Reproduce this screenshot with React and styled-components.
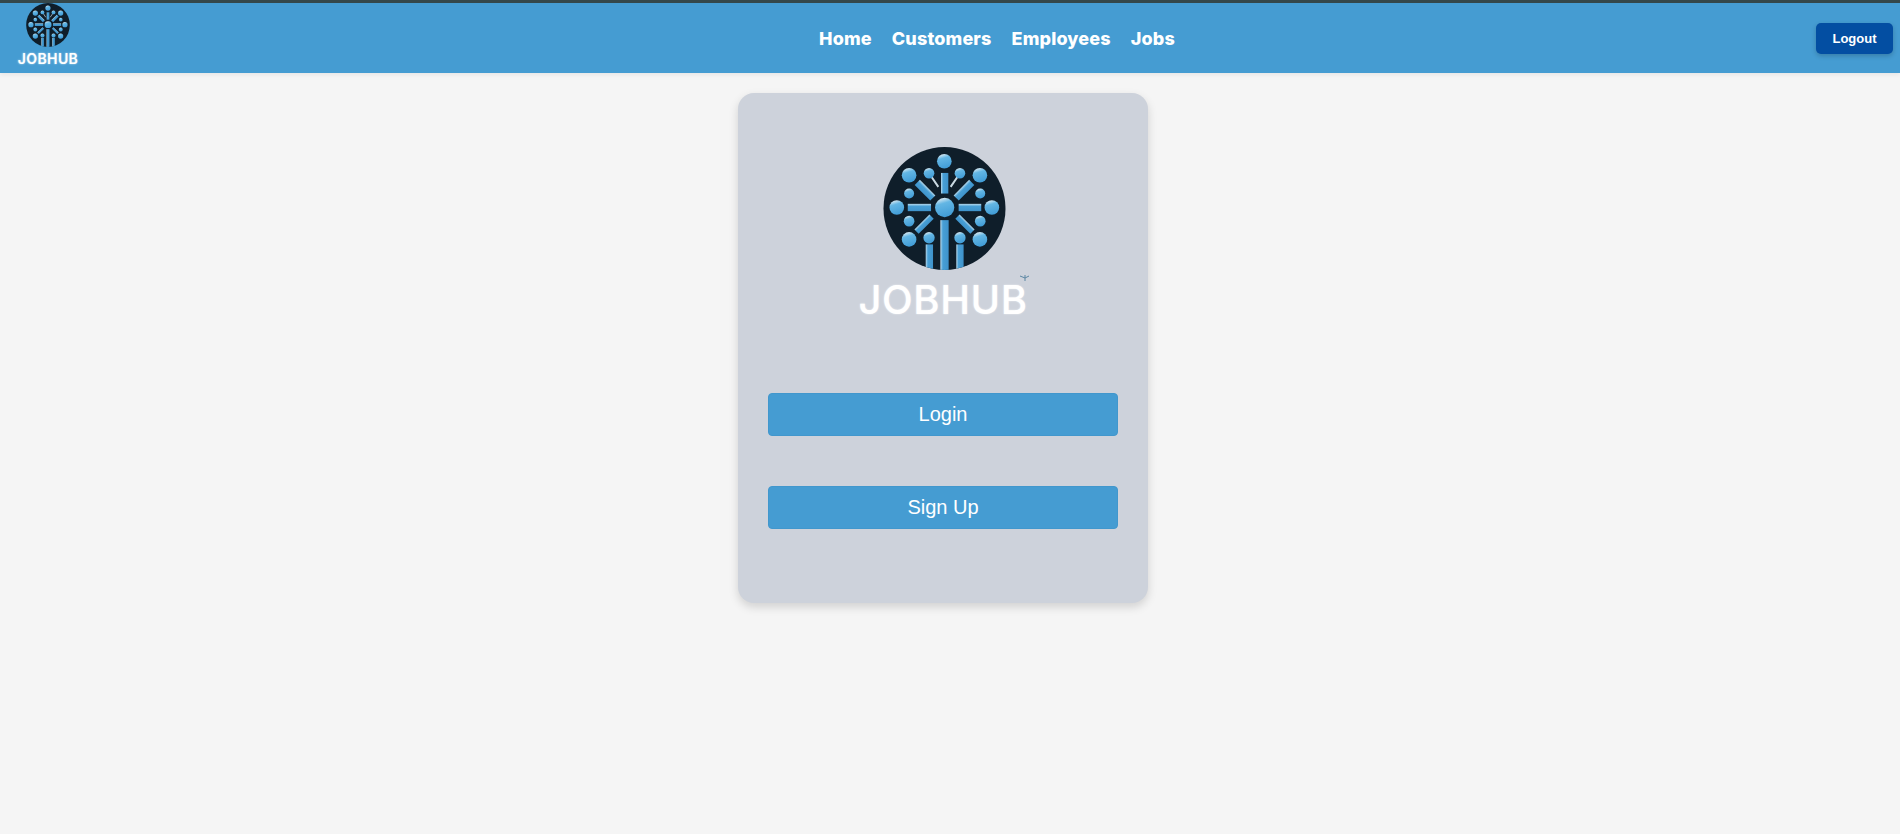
import React from "react";
import styled, { createGlobalStyle } from "styled-components";

const GlobalStyle = createGlobalStyle`
  html, body {
    margin: 0;
    padding: 0;
    background: #f5f5f5;
    font-family: "Liberation Sans", Arial, sans-serif;
  }
`;

const Page = styled.div`
  min-height: 834px;
  background: #f5f5f5;
`;

const NavBar = styled.nav`
  height: 70px;
  box-sizing: content-box;
  border-top: 3px solid #34474a;
  background: #459cd2;
  display: flex;
  align-items: center;
  justify-content: space-between;
  padding: 0 7px 0 18px;
  box-shadow: 0 2px 4px rgba(0, 0, 0, 0.06);
`;

const Brand = styled.div`
  width: 160px;
  height: 70px;
  display: flex;
  flex-direction: column;
  align-items: flex-start;
`;

const BrandStack = styled.div`
  width: 60px;
  display: flex;
  flex-direction: column;
  align-items: center;
`;

const NavLinks = styled.div`
  display: flex;
  gap: 20px;
`;

const NavLink = styled.a`
  color: #fff;
  font-family: Inter, "Open Sans", sans-serif;
  font-weight: 800;
  font-size: 18px;
  letter-spacing: 0.15px;
  line-height: 24px;
  text-decoration: none;
  margin-top: 1px;
`;

const LogoutButton = styled.button`
  width: 77px;
  height: 31px;
  border: none;
  border-radius: 5px;
  background: #034ea2;
  color: #fff;
  font-family: "Liberation Sans", Arial, sans-serif;
  font-weight: 700;
  font-size: 13px;
  box-shadow: 0 2px 5px rgba(0, 0, 0, 0.2);
`;

const Main = styled.main`
  display: flex;
  justify-content: center;
  padding: 20px 14px 0 0;
`;

const Card = styled.section`
  width: 410px;
  height: 510px;
  box-sizing: border-box;
  padding: 54px 30px 0;
  background: #cdd2db;
  border-radius: 16px;
  box-shadow: 0 4px 10px rgba(0, 0, 0, 0.15);
  display: flex;
  flex-direction: column;
  align-items: center;
`;

const LogoStack = styled.div`
  display: flex;
  flex-direction: column;
  align-items: center;
  position: relative;
  margin-bottom: 71px;
`;

const MarkSlot = styled.div`
  display: flex;
  margin-left: ${(p) => (p.$shift ? "3px" : "0")};
`;

const LogoWord = styled.span`
  color: #fff;
  font-family: Inter, "Open Sans", sans-serif;
  font-weight: ${(p) => (p.$small ? 600 : 500)};
  font-size: ${(p) => (p.$small ? "14px" : "40px")};
  letter-spacing: ${(p) => (p.$small ? "0.4px" : "0.6px")};
  line-height: ${(p) => (p.$small ? "13px" : "44px")};
  margin-top: ${(p) => (p.$small ? "5px" : "8px")};
  text-shadow: 0 0 2px rgba(255, 255, 255, 0.7);
`;

const TradeMark = styled.svg`
  position: absolute;
  right: -2px;
  bottom: 40px;
`;

const ActionButton = styled.button`
  width: 350px;
  height: 43px;
  margin-bottom: 50px;
  border: 1px solid #4197cd;
  border-radius: 4px;
  background: #459cd2;
  color: #fff;
  font-family: "Liberation Sans", Arial, sans-serif;
  font-size: 20px;
`;

const DOTS = [
  [313, 93, 22], [207, 135, 22], [420, 135, 22], [267, 129, 16], [360, 129, 16],
  [207, 190, 15], [421, 190, 15], [170, 232, 22], [456, 232, 22], [207, 273, 16],
  [421, 273, 16], [207, 328, 22], [420, 328, 22], [267, 323, 17], [360, 323, 17],
  [314, 232, 29],
];

// x, y, width, height, rotation around the bar's middle
const BARS = [
  [303, 128, 22, 62, 0], [203, 221, 70, 22, 0], [356, 221, 68, 22, 0],
  [301, 270, 25, 152, 0], [257, 343, 22, 77, 0], [349, 343, 22, 77, 0],
  [222, 169, 66, 22, 45], [339, 169, 66, 22, -45],
  [220, 273, 64, 18, -45], [343, 273, 64, 18, 45],
];

function LogoMark({ size, id }) {
  return (
    <svg width={size} height={size} viewBox="130 50 367 370">
      <defs>
        <linearGradient id={`${id}-dot`} x1="0.3" y1="0" x2="0.6" y2="1">
          <stop offset="0%" stopColor="#e4eef3" />
          <stop offset="30%" stopColor="#63b6e4" />
          <stop offset="100%" stopColor="#3f9bd6" />
        </linearGradient>
        <linearGradient id={`${id}-bar`} x1="0" y1="0" x2="1" y2="0">
          <stop offset="0%" stopColor="#b7d9ec" />
          <stop offset="30%" stopColor="#479fd6" />
          <stop offset="100%" stopColor="#3f93cb" />
        </linearGradient>
        <linearGradient id={`${id}-bar-flat`} x1="0" y1="0" x2="0" y2="1">
          <stop offset="0%" stopColor="#b7d9ec" />
          <stop offset="35%" stopColor="#479fd6" />
          <stop offset="100%" stopColor="#3f93cb" />
        </linearGradient>
        <clipPath id={`${id}-clip`}>
          <ellipse cx="313.5" cy="235" rx="183.5" ry="185" />
        </clipPath>
      </defs>
      <ellipse cx="313.5" cy="235" rx="183.5" ry="185" fill="#0f1e2a" />
      <g clipPath={`url(#${id}-clip)`}>
        <path d="M267 129L295 170M360 129L332 170" stroke="#c9d9e2" strokeWidth="6" />
        {BARS.map(([x, y, w, h, r]) => (
          <rect
            key={`${x}-${y}`}
            x={x}
            y={y}
            width={w}
            height={h}
            fill={`url(#${id}-${w > h ? "bar-flat" : "bar"})`}
            transform={`rotate(${r} ${x + w / 2} ${y + h / 2})`}
          />
        ))}
        {DOTS.map(([cx, cy, r]) => (
          <circle key={`${cx}-${cy}`} cx={cx} cy={cy} r={r} fill={`url(#${id}-dot)`} />
        ))}
      </g>
    </svg>
  );
}

export default function App() {
  return (
    <Page>
      <GlobalStyle />
      <NavBar>
        <Brand>
          <BrandStack>
            <MarkSlot>
              <LogoMark size={44} id="nav" />
            </MarkSlot>
            <LogoWord $small>JOBHUB</LogoWord>
          </BrandStack>
        </Brand>
        <NavLinks>
          <NavLink href="#">Home</NavLink>
          <NavLink href="#">Customers</NavLink>
          <NavLink href="#">Employees</NavLink>
          <NavLink href="#">Jobs</NavLink>
        </NavLinks>
        <LogoutButton>Logout</LogoutButton>
      </NavBar>
      <Main>
        <Card>
          <LogoStack>
            <MarkSlot $shift>
              <LogoMark size={123} id="card" />
            </MarkSlot>
            <LogoWord>JOBHUB</LogoWord>
            <TradeMark width="10" height="8" viewBox="0 0 10 8">
              <path d="M0 2L5 4L9 2M5 1V7" stroke="#5c87a3" strokeWidth="1" fill="none" />
            </TradeMark>
          </LogoStack>
          <ActionButton>Login</ActionButton>
          <ActionButton>Sign Up</ActionButton>
        </Card>
      </Main>
    </Page>
  );
}
